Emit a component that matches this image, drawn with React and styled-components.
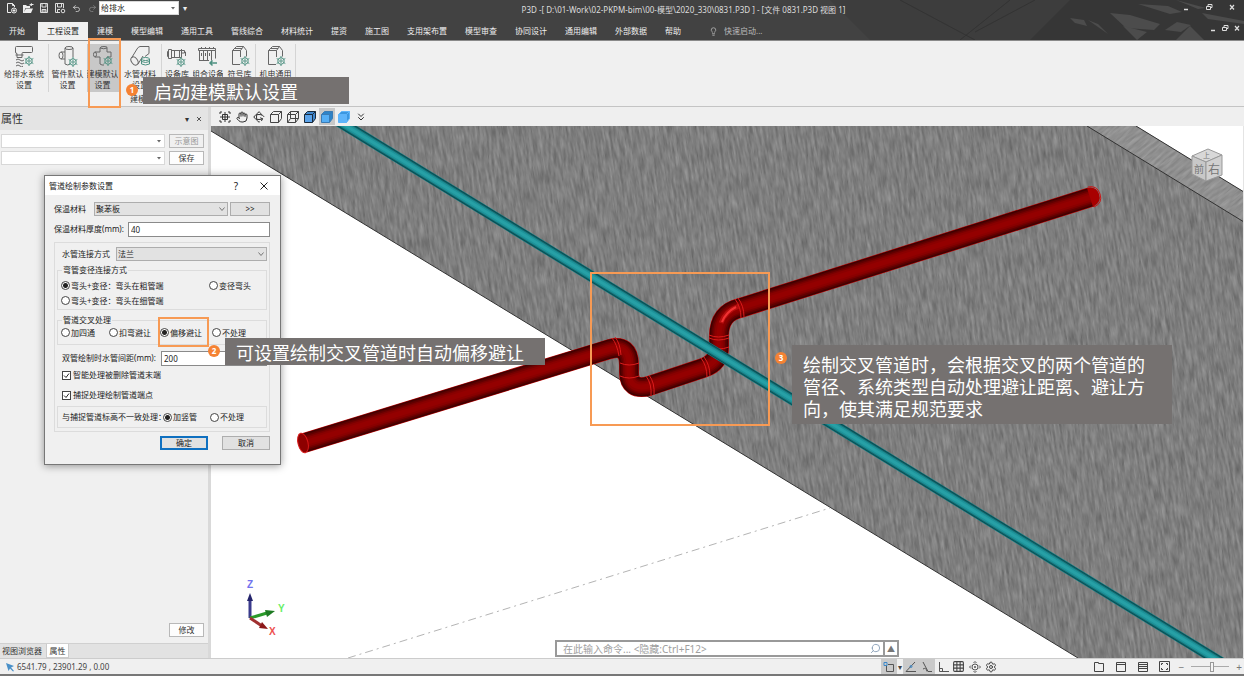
import React, { useState } from 'react';
import styled, { createGlobalStyle } from 'styled-components';
import { Hand, ChevronsDown, Settings, Grid3x3, Undo2, Redo2, Lightbulb, Search, Rotate3d } from 'lucide-react';

const TABS = ['开始', '工程设置', '建模', '模型编辑', '通用工具', '管线综合', '材料统计', '提资', '施工图', '支用架布置', '模型审查', '协同设计', '通用编辑', '外部数据', '帮助'];

const RIBBON = [
  { id: 'system', lines: ['给排水系统', '设置'], line: true },
  { id: 'fitting', lines: ['管件默认', '设置'] },
  { id: 'model', lines: ['建模默认', '设置'], active: true },
  { id: 'material', lines: ['水管材料', '设置'], line: true },
  { id: 'device', lines: ['设备库'] },
  { id: 'combo', lines: ['组合设备'] },
  { id: 'symbol', lines: ['符号库'], line: true },
  { id: 'common', lines: ['机电通用'], line: true },
];

const Gear = ({ x, y }) => (
  <g stroke="#4c9080" strokeWidth="1" fill="none">
    <circle cx={x} cy={y} r="3.2" />
    <circle cx={x} cy={y} r="1.2" />
    <path d={`M${x} ${y - 5}v2M${x} ${y + 3}v2M${x - 4.3} ${y - 2.5}l1.6 1M${x + 2.7} ${y + 1.5}l1.6 1M${x - 4.3} ${y + 2.5}l1.6 -1M${x + 2.7} ${y - 1.5}l1.6 -1`} />
  </g>
);

const ribbonShapes = {
  system: (
    <>
      <path d="M2.5 2.5q0-1 1-1h15q1 0 1 1v4q0 1-1 1H10q-1 0-1 1v4H4v-4q-1.5 0-1.5-1.5z" />
      <path d="M2.5 10h8M3 15q2-2 4 0t4 0M3 18q2-2 4 0t4 0M3 21q2-2 4 0t3 0" />
    </>
  ),
  fitting: (
    <>
      <ellipse cx="12" cy="3" rx="4" ry="1.5" />
      <path d="M8 3v4H4M16 3v9M4 7q-2 0-2 3.5T4 14h4v5q3 2 5 0M4 7q2 0 2 3.5T4 14M8 7v7" />
    </>
  ),
  model: (
    <path d="M8 3q0-1.5 4-1.5T15 3v4h4v5h-4v1M8 3v4H3q-1.500 0-1.500 2.500T3 12h5v7q2 1.500 4 1M3 7q1.500 0 1.500 2.500T3 12M8 3q4 1.500 7 0" />
  ),
  material: (
    <>
      <path d="M20 1.500h-9Q9 2 8 4L2.500 13M20 1.500v7l-4 3M14 11l-5 8" />
      <ellipse cx="5.500" cy="16" rx="3" ry="4.500" transform="rotate(-35 5.500 16)" />
      <g stroke="#4c9080">
        <ellipse cx="16.500" cy="14" rx="4" ry="1.500" />
        <path d="M12.500 14v5q4 2 8 0v-5M12.500 16.500q4 2 8 0" />
      </g>
    </>
  ),
  device: <path d="M2.500 4.500h3v9h-3zM5.500 5.500h10v7h-10M8.500 5.500v7M13.500 5.500v7M15.500 4v4h3V5.500h-3M2.500 6.500h-1v5h1M18.500 7h1v4" />,
  combo: (
    <>
      <path d="M1.500 3.500h17v2h-17zM2.500 5.500v10M6.500 5.500v10M10.500 5.500v10M14.500 5.500v10M18.500 5.500v8M2 15.500h10M4.500 2v2M8.500 2v2M12.500 2v2M16.500 2v2M4.500 8v3M8.500 8v3M12.500 8v3" />
      <path d="M20 18h-7M15.500 15.500L13 18l2.500 2.500" stroke="#4c9080" strokeWidth="1.500" />
    </>
  ),
  symbol: <path d="M3.500 5.500v14H11M3.500 5.500l4-4h7l3 4v6M3.500 5.500h8V12M11.500 5.500l3-4M6 3.500h7" />,
  common: <path d="M3.500 5.500v14H11M3.500 5.500l4-4h7l3 4v6M3.500 5.500h8V12M11.500 5.500l3-4M6 3.500h7" />,
};

const gears = { system: [16, 16], fitting: [16, 17], model: [16, 16], device: [15, 17], symbol: [16, 16], common: [16, 16] };

const RibbonIcon = ({ id }) => (
  <svg width="22" height="22" viewBox="0 0 22 22" fill="none" stroke="#666" strokeWidth="1">
    {ribbonShapes[id]}
    {gears[id] && <Gear x={gears[id][0]} y={gears[id][1]} />}
  </svg>
);

const Cube = ({ fill = 'none', side = fill, stroke = '#444', inner }) => (
  <svg width="14" height="14" viewBox="0 0 14 14" fill={fill} stroke={stroke} strokeWidth="1">
    <path d="M1.500 4.500l3-3h8v7l-3 4" fill={side} />
    <path d="M1.500 4.500h8v8h-8zM9.500 4.500l3-3" />
    {inner && <path d="M4.500 1.500v7h8M4.500 8.500l-3 4" fill="none" />}
  </svg>
);

const RED_PIPE = 'M304 443L610 349Q629 344 629 365V372Q629 391 649 386L703 368Q719 363 719 347V336Q719 313 740 308L1091 197';
const RED_LAYERS = [[20, '#c40a0a'], [19, '#3c0000'], [17, '#4c0000'], [15, '#600000'], [12, '#780000'], [9, '#8a0000'], [5, '#940000']];
const TEAL_LAYERS = [[11, '#0c8086'], [10, '#0d4a50'], [8, '#14757b'], [6, '#1f9299'], [3, '#27a0a6']];

const Scene = () => (
  <SceneSvg viewBox="211 126 1033 532" preserveAspectRatio="xMinYMin slice">
    <defs>
      <filter id="grain" x="0" y="0" width="100%" height="100%" colorInterpolationFilters="sRGB">
        <feTurbulence type="fractalNoise" baseFrequency="0.400 0.060" numOctaves="3" seed="4" />
        <feColorMatrix values="0.260 0 0 0 0.365  0.260 0 0 0 0.365  0.260 0 0 0 0.365  0 0 0 0 1" />
      </filter>
      <clipPath id="wall">
        <path d="M211 126H1136L1244 192V658H1078L211 131z" />
      </clipPath>
      <clipPath id="edge">
        <path d="M1087 126H1136L1244 192V222z" />
      </clipPath>
    </defs>
    <rect x="211" y="126" width="1033" height="532" fill="#fff" />
    <g clipPath="url(#wall)">
      <rect x="100" y="-200" width="1300" height="1200" filter="url(#grain)" transform="rotate(-8 700 400)" />
    </g>
    <g clipPath="url(#edge)">
      <rect x="900" y="-100" width="500" height="500" filter="url(#grain)" transform="rotate(50 1150 150)" />
      <path d="M1087 126H1136L1244 192V222z" fill="#bbb" opacity="0.300" />
    </g>
    <path d="M211 131L1078 658M1087 126L1244 222M1136 126L1244 192" stroke="#333" fill="none" />
    <path d="M348 658L830 508" stroke="#b4b4b4" strokeDasharray="8 4 2 4" />

    {RED_LAYERS.map(([w, c]) => (
      <path key={w} d={RED_PIPE} fill="none" stroke={c} strokeWidth={w} />
    ))}
    <ellipse cx="303" cy="443" rx="5" ry="10" transform="rotate(-14 303 443)" fill="#8d0000" stroke="#d81818" />
    <path d="M1087 188q9-2 12 6t-6 13z" fill="#a80000" />
    <path d="M1088 187q9-2 12 7t-6 13" fill="none" stroke="#d01414" />
    <path d="M721 323Q725 311 739 306" fill="none" stroke="#d81c1c" strokeWidth="5" opacity="0.500" />
    <path d="M722 322Q726 312 736 307" fill="none" stroke="#ff3c3c" strokeWidth="2" opacity="0.800" />
    <path d="M612 338q5 6 7 18M615 337q5 6 6 18M620 363q9 4 19 0M620 376q9 4 19 0M646 376q6 8 5 20M649 375q6 8 5 20M701 358q6 8 6 19M704 357q6 8 6 19M709 335q9 4 20 0M709 338q9 4 20 0M709 347q9 4 20 0M735 299q6 8 6 19M738 298q6 8 6 19" fill="none" stroke="#dc1c1c" />

    {TEAL_LAYERS.map(([w, c]) => (
      <path key={w} d="M330 116L1230 668" stroke={c} strokeWidth={w} />
    ))}

    {/* view cube */}
    <g stroke="#999" fill="#c8c8c8">
      <path d="M1192 156L1208 149L1222 155L1206 162z" fill="#d8d8d8" />
      <path d="M1192 156L1206 162V181L1192 174z" />
      <path d="M1206 162L1222 155V175L1206 181z" fill="#d0d0d0" />
    </g>
    <g fill="#777" fontFamily="'Noto Sans CJK SC', sans-serif">
      <text x="1194" y="173" fontSize="10">前</text>
      <text x="1208" y="174" fontSize="12">右</text>
      <text x="1203" y="158" fontSize="7">上</text>
    </g>

    {/* axes */}
    <g strokeWidth="3" fill="none">
      <path d="M250 618V598" stroke="#3a3a8c" />
      <path d="M250 618L267 613" stroke="#2a9a2a" />
      <path d="M250 618L262 626" stroke="#a03030" />
    </g>
    <path d="M247 601L250 593L253 601z" fill="#24246c" />
    <path d="M265 610L275 611L267 617z" fill="#1d7a22" />
    <path d="M262 622L268 629L259 628z" fill="#8c1818" />
    <g fontFamily="'Liberation Sans', sans-serif" fontWeight="bold" fontSize="10">
      <text x="247" y="588" fill="#7272ee">Z</text>
      <text x="278" y="612" fill="#66ee66">Y</text>
      <text x="269" y="635" fill="#ee5050">X</text>
    </g>
  </SceneSvg>
);

const WindowControls = ({ small }) => (
  <Controls $small={small}>
    <button aria-label="最小化"><svg width="8" height="8"><path d="M2 6.500h4" stroke="#ddd" strokeWidth="1.500" /></svg></button>
    <button aria-label="还原"><svg width="8" height="8" fill="none" stroke="#ddd"><path d="M1.500 3.500h4v3h-4zM3 3V1.500h4v3H6" /></svg></button>
    <button aria-label="关闭"><svg width="8" height="8"><path d="M2 2l4 4.500M6 2L2 6.500" stroke="#ddd" strokeWidth="1.200" /></svg></button>
  </Controls>
);

const Arrow = ({ chevron }) => (
  <ArrowMark width="6" height="6" viewBox="0 0 6 6">
    {chevron ? <path d="M0.500 1.500L3 4.500L5.500 1.500" fill="none" stroke="#777" /> : <path d="M1 2h4L3 4.500z" fill="#666" />}
  </ArrowMark>
);

const Combo = ({ id, label, options, gray, width }) => (
  <ComboBox $gray={gray} $width={width}>
    <select id={id} aria-label={label}>
      {options.map(o => <option key={o}>{o}</option>)}
    </select>
    <Arrow chevron={gray} />
  </ComboBox>
);

const Radio = ({ name, value, current, onChange, children }) => (
  <Option>
    <input type="radio" name={name} checked={current === value} onChange={() => onChange(value)} />
    {children}
  </Option>
);

const PipeDialog = () => {
  const [elbow, setElbow] = useState('thick');
  const [cross, setCross] = useState('offset');
  const [level, setLevel] = useState('riser');

  return (
    <Dialog role="dialog" aria-label="管道绘制参数设置">
      <DialogTitle>
        <span>管道绘制参数设置</span>
        <button aria-label="帮助">?</button>
        <button aria-label="关闭"><svg width="8" height="8"><path d="M0.500 0.500l7 7M7.500 0.500l-7 7" stroke="#222" /></svg></button>
      </DialogTitle>
      <DialogBody>
        <Field>
          <label htmlFor="mat">保温材料</label>
          <Combo id="mat" gray options={['聚苯板']} width="134px" />
          <PushButton $width="40px">&gt;&gt;</PushButton>
        </Field>
        <Field>
          <label htmlFor="thick">保温材料厚度(mm):</label>
          <TextBox id="thick" defaultValue="40" $width="142px" />
        </Field>
        <Frame>
          <Field $inset>
            <label htmlFor="joint">水管连接方式</label>
            <Combo id="joint" gray options={['法兰']} width="151px" />
          </Field>
          <Group $height="45px">
            <legend>弯管变径连接方式</legend>
            <OptionGrid $columns="148px auto" $top="3px">
              <Radio name="elbow" value="thick" current={elbow} onChange={setElbow}>弯头+变径：弯头在粗管端</Radio>
              <Radio name="elbow" value="reduce" current={elbow} onChange={setElbow}>变径弯头</Radio>
              <Radio name="elbow" value="thin" current={elbow} onChange={setElbow}>弯头+变径：弯头在细管端</Radio>
            </OptionGrid>
          </Group>
          <Group $height="30px">
            <legend>管道交叉处理</legend>
            <OptionGrid $columns="48px 51px 52px auto">
              <Radio name="cross" value="four" current={cross} onChange={setCross}>加四通</Radio>
              <Radio name="cross" value="bend" current={cross} onChange={setCross}>扣弯避让</Radio>
              <Radio name="cross" value="offset" current={cross} onChange={setCross}>偏移避让</Radio>
              <Radio name="cross" value="none" current={cross} onChange={setCross}>不处理</Radio>
            </OptionGrid>
          </Group>
          <Field $inset>
            <label htmlFor="gap">双管绘制时水管间距(mm):</label>
            <TextBox id="gap" defaultValue="200" $width="106px" />
          </Field>
          <CheckRow $height="18px"><input type="checkbox" defaultChecked />智能处理被删除管道末端</CheckRow>
          <CheckRow $height="22px"><input type="checkbox" defaultChecked />捕捉处理绘制管道端点</CheckRow>
          <LevelRow>
            <span>与捕捉管道标高不一致处理：</span>
            <Radio name="level" value="riser" current={level} onChange={setLevel}>加竖管</Radio>
            <Radio name="level" value="none" current={level} onChange={setLevel}>不处理</Radio>
          </LevelRow>
        </Frame>
        <DialogButtons>
          <PushButton $width="48px" $primary>确定</PushButton>
          <PushButton $width="48px">取消</PushButton>
        </DialogButtons>
      </DialogBody>
    </Dialog>
  );
};

const App = () => {
  const [tab, setTab] = useState('工程设置');

  return (
    <Page>
      <GlobalStyle />
      <Header>
        <HeaderArt viewBox="0 0 414 40" preserveAspectRatio="xMaxYMin slice">
          <path d="M0 0H414V40H40z" fill="#363636" opacity="0.400" />
          <path d="M240 0H414V40H200z" fill="#2f2f2f" opacity="0.500" />
          <g fill="#4c4c4c">
            <path d="M280 13l20 2 30 9 -6 6 -28-2z" />
            <path d="M308 4l30 2 14 6 -12 2z" />
            <path d="M240 18l14 2 3 6 -12-3z" />
            <path d="M293 26l24 6 -10 8z" />
            <path d="M335 30l12-8 14 3 -10 7z" />
            <path d="M346 40l14-14 14 14z" />
            <path d="M372 13l42 8v3l-36-5z" />
            <path d="M346 0l30 8 -8 1z" />
            <path d="M258 20l10 4 10 10z" />
          </g>
          <path d="M70 0l75 40M180 0l-50 40M205 0l-60 32" stroke="#333" fill="none" />
        </HeaderArt>
        <TitleRow>
          <QuickBar>
            <button aria-label="新建"><svg width="12" height="12" fill="none" stroke="#eee"><path d="M5 10.500H1.500v-9h5l2 2V5M6.500 1.500v2h2" /><circle cx="8" cy="8.500" r="2.500" /><path d="M8 7v3M6.500 8.500h3" /></svg></button>
            <button aria-label="打开"><svg width="12" height="12" fill="#eee"><path d="M1 11V3h3l1 1h3v2H3.500L2 10l2-3.500h7L9 11zM7 3l3-2v1h1.500v1H10v1z" /></svg></button>
            <button aria-label="保存"><svg width="12" height="12" fill="none" stroke="#ddd"><path d="M2.500 1.500h7v9h-7zM4 1.500V5h4V1.500M4 10.500v-3h4v3M4 9h4" /></svg></button>
            <button aria-label="另存为"><svg width="12" height="12" fill="none" stroke="#ddd"><path d="M6 10.500H1.500v-9h8V6M3.500 1.500V5h4V1.500M3.500 10V7.500H6" /><circle cx="9" cy="9" r="1.800" /></svg></button>
            <button aria-label="撤销"><Undo2 size={9} color="#ddd" /></button>
            <button aria-label="重做"><Redo2 size={9} color="#888" /></button>
          </QuickBar>
          <Combo id="major" label="专业" options={['给排水']} width="80px" />
          <More>▾</More>
          <Title>P3D -[ D:\01-Work\02-PKPM-bim\00-模型\2020_330\0831.P3D ] - [文件 0831.P3D 视图 1]</Title>
          <WindowControls />
        </TitleRow>
        <TabRow>
          {TABS.map(t => (
            <Tab key={t} $active={t === tab} onClick={() => setTab(t)}>{t}</Tab>
          ))}
          <QuickStart>
            <Lightbulb size={9} />
            <input aria-label="快速启动" placeholder="快速启动..." />
          </QuickStart>
          <WindowControls small />
        </TabRow>
      </Header>

      <Ribbon>
        {RIBBON.map(item => (
          <Tool key={item.id} $active={item.active} $line={item.line}>
            <RibbonIcon id={item.id} />
            {item.lines.map(l => <span key={l}>{l}</span>)}
          </Tool>
        ))}
        <GroupName>建模设置</GroupName>
      </Ribbon>

      <Main>
        <Side>
          <SideTitle>
            <h2>属性</h2>
            <button aria-label="菜单">▾</button>
            <button aria-label="关闭面板"><svg width="6" height="6"><path d="M1 1l4 4M5 1L1 5" stroke="#555" /></svg></button>
          </SideTitle>
          <SideForm>
            <Combo id="type" label="类型" options={['']} />
            <SideButton $muted disabled>示意图</SideButton>
            <Combo id="style" label="样式" options={['']} />
            <SideButton>保存</SideButton>
          </SideForm>
          <SideFoot><SideButton>修改</SideButton></SideFoot>
          <SideTabs>
            <button>视图浏览器</button>
            <SideTabOn>属性</SideTabOn>
          </SideTabs>
        </Side>

        <View>
          <ViewBar>
            <ViewButton aria-label="全图"><svg width="12" height="12" fill="none" stroke="#333"><path d="M1 3V1h2M9 1h2v2M11 9v2H9M3 11H1V9M6 1v10M1 6h10M3.500 3.500h5v5h-5z" /></svg></ViewButton>
            <ViewButton aria-label="平移"><Hand size={12} /></ViewButton>
            <ViewButton aria-label="旋转"><Rotate3d size={12} /></ViewButton>
            <ViewButton aria-label="线框"><Cube /></ViewButton>
            <ViewButton aria-label="隐藏线"><Cube inner /></ViewButton>
            <ViewButton aria-label="着色"><Cube fill="#5ba3ea" side="#3f86cc" stroke="#1a2a3a" /></ViewButton>
            <ViewButton aria-label="真实" $active><Cube fill="#55aef5" side="#2d83c8" stroke="#3a7bb5" /></ViewButton>
            <ViewButton aria-label="渲染"><Cube fill="#5eb4fa" side="#3c97e0" stroke="#5eb4fa" /></ViewButton>
            <ViewButton aria-label="更多"><ChevronsDown size={12} /></ViewButton>
          </ViewBar>
          <Canvas>
            <Scene />
            <Command>
              <input aria-label="命令" placeholder="在此输入命令... <隐藏:Ctrl+F12>" />
              <FlippedSearch size={11} color="#8aa0b8" />
              <button aria-label="展开">▲</button>
            </Command>
          </Canvas>
        </View>
      </Main>

      <Status>
        <svg width="10" height="10"><path d="M1 1l8 3-3 1.500L9 9 8 9.500 5 6.500 3.500 9z" fill="#4a90c8" /></svg>
        <Coords>6541.79 , 23901.29 , 0.00</Coords>
        <SnapTools>
          <StatusButton $active aria-label="捕捉"><svg width="12" height="12" fill="none" stroke="#555"><path d="M5 3.500h5.500v7h-7V5" /><path d="M1 1.500h3v3H1z" stroke="#3b87c8" /></svg></StatusButton>
          <Caret>▾</Caret>
          <StatusButton $active aria-label="极轴"><svg width="12" height="12" fill="none" stroke="#555"><path d="M11 10.500H1L10 1" /><circle cx="6" cy="5.500" r="1" stroke="#3b87c8" /></svg></StatusButton>
          <StatusButton $active aria-label="角度"><svg width="12" height="12" fill="none" stroke="#555"><path d="M2 1l5 9.500h4M2 8q3-2 4 2.500" /></svg></StatusButton>
          <StatusButton aria-label="正交"><svg width="12" height="12" fill="none" stroke="#555"><path d="M2.500 1v9.500H12M2.500 7.500h3v3" /></svg></StatusButton>
          <StatusButton aria-label="栅格"><Grid3x3 size={13} /></StatusButton>
          <StatusButton aria-label="定位"><svg width="12" height="12" fill="none" stroke="#555"><circle cx="6" cy="6" r="3" /><path d="M6 5v2M5 6h2M4.500 2L6 0.500 7.500 2M4.500 10L6 11.500 7.500 10M2 4.500L0.500 6 2 7.500M10 4.500L11.500 6 10 7.500" /></svg></StatusButton>
          <StatusButton aria-label="设置"><Settings size={12} /></StatusButton>
        </SnapTools>
        <Layouts>
          <button aria-label="新窗口"><svg width="11" height="11" fill="none" stroke="#444"><path d="M1.500 1.500h4v1h5v8h-9z" /></svg></button>
          <button aria-label="单窗口"><svg width="11" height="11" fill="none" stroke="#444"><path d="M1.500 1.500h9v9h-9zM1.500 3.500h9" /></svg></button>
          <button aria-label="层叠"><svg width="11" height="11" fill="none" stroke="#444"><path d="M1.500 1.500h9v9h-9zM1.500 3.500h9M1.500 5.500h9M1.500 7.500h9" /></svg></button>
          <button aria-label="平铺"><svg width="11" height="11" fill="none" stroke="#444"><path d="M0.500 0.500h10v10h-10zM2.500 4V2.500H4M7 2.500h1.500V4M8.500 7v1.500H7M4 8.500H2.500V7" /></svg></button>
        </Layouts>
        <Zoom>
          <button aria-label="缩小">−</button>
          <input type="range" aria-label="缩放" defaultValue="55" />
          <button aria-label="放大">+</button>
        </Zoom>
      </Status>

      <PipeDialog />

      <Marker $x={88} $y={38} $w={33} $h={70} />
      <Marker $x={158} $y={317} $w={51} $h={30} />
      <Marker $x={590} $y={272} $w={180} $h={154} />
      <Badge $x={126} $y={84}>1</Badge>
      <Badge $x={208} $y={345}>2</Badge>
      <Badge $x={775} $y={352}>3</Badge>
      <Note $x={143} $y={77} $w={206}>启动建模默认设置</Note>
      <Note $x={225} $y={338} $w={320}>可设置绘制交叉管道时自动偏移避让</Note>
      <Note $x={792} $y={345} $w={380} $tall>绘制交叉管道时，会根据交叉的两个管道的管径、系统类型自动处理避让距离、避让方向，使其满足规范要求</Note>
    </Page>
  );
};

export default App;

const GlobalStyle = createGlobalStyle`
  * {
    box-sizing: border-box;
  }
  body {
    margin: 0;
    font: 8px/10px 'Noto Sans', 'Noto Sans CJK SC', sans-serif;
    color: #333;
  }
  button, input, select {
    font: inherit;
    color: inherit;
    margin: 0;
    padding: 0;
    border: 0;
    background: none;
  }
  button {
    display: flex;
    align-items: center;
    justify-content: center;
    white-space: nowrap;
  }
  svg {
    flex: none;
  }
`;

const Page = styled.div`
  position: relative;
  min-height: 100vh;
  display: flex;
  flex-direction: column;
  background: #f0f0f0;
  border-bottom: 2px solid #777;
  overflow: hidden;
`;

const Header = styled.header`
  position: relative;
  background: #424242;
  border-bottom: 1px solid #8a8a8a;
`;

const HeaderArt = styled.svg`
  position: absolute;
  right: 0;
  top: 0;
  width: 414px;
  height: 40px;
`;

const TitleRow = styled.div`
  position: relative;
  display: flex;
  height: 22px;
  padding: 1px 4px 6px 6px;
`;

const QuickBar = styled.div`
  display: flex;
  gap: 4px;
  width: 93px;

  button {
    width: 12px;
    height: 14px;
  }
`;

const More = styled.span`
  width: 12px;
  color: #eee;
  line-height: 14px;
  text-align: center;
`;

const Title = styled.h1`
  flex: 1;
  margin: 0;
  padding-right: 6px;
  font-size: 8px;
  line-height: 18px;
  font-weight: normal;
  text-align: center;
  color: #ddd;
  white-space: nowrap;
`;

const Controls = styled.div`
  display: flex;
  gap: ${p => (p.$small ? '4px' : '15px')};
  margin-left: auto;
  align-items: center;
  height: 12px;
  padding-right: ${p => (p.$small ? '3px' : '4px')};
`;

const TabRow = styled.nav`
  position: relative;
  display: flex;
  align-items: stretch;
  height: 18px;
`;

const Tab = styled.button`
  padding: 0 9px;
  color: ${p => (p.$active ? '#222' : '#eee')};
  background: ${p => (p.$active ? '#f0f0f0' : 'none')};
  margin-left: ${p => (p.$active ? '4px' : '0')};
`;

const QuickStart = styled.div`
  display: flex;
  align-items: center;
  gap: 6px;
  padding-left: 19px;
  color: #bbb;

  input {
    width: 60px;
  }
  input::placeholder {
    color: #bbb;
  }
`;

const Ribbon = styled.section`
  display: grid;
  grid-template-columns: 49px 38px 32px 43px 31px 31px 32px 40px;
  align-items: start;
  height: 66px;
  padding-top: 3px;
  border-bottom: 1px solid #c4c4c4;
`;

const Tool = styled.button`
  flex-direction: column;
  justify-content: flex-start;
  height: 48px;
  padding-top: 1px;
  overflow: hidden;
  background: ${p => (p.$active ? '#c8c8c8' : 'none')};
  border-right: 1px solid ${p => (p.$line ? '#d4d4d4' : 'transparent')};

  svg {
    margin-bottom: 1px;
  }
  span {
    line-height: 11px;
  }
`;

const GroupName = styled.span`
  grid-column: 4;
  justify-self: end;
  white-space: nowrap;
`;

const Main = styled.main`
  flex: 1;
  display: flex;
`;

const Side = styled.aside`
  width: 211px;
  display: flex;
  flex-direction: column;
  border-right: 3px solid #d9d9d9;
`;

const SideTitle = styled.div`
  display: flex;
  align-items: center;
  height: 23px;
  gap: 7px;
  padding: 0 6px 0 1px;
  background: #e4e4e4;

  h2 {
    flex: 1;
    margin: 0;
    font-size: 11px;
    font-weight: normal;
  }
`;

const SideForm = styled.div`
  display: grid;
  grid-template-columns: 1fr 35px;
  gap: 3px 4px;
  padding: 4px 4px 0 1px;
`;

const SideButton = styled.button`
  width: 35px;
  height: 14px;
  color: ${p => (p.$muted ? '#999' : '#333')};
  background: ${p => (p.$muted ? '#f0f0f0' : '#fdfdfd')};
  border: 1px solid #b8b8b8;
`;

const SideFoot = styled.div`
  margin-top: auto;
  padding: 0 4px 6px;
  display: flex;
  justify-content: flex-end;
`;

const SideTabs = styled.div`
  display: flex;
  height: 15px;
  background: #e2e2e2;
  border-top: 1px solid #d0d0d0;

  button {
    padding: 0 2px;
  }
`;

const SideTabOn = styled.button`
  margin-left: 2px;
  width: 23px;
  background: #fff;
  border: 1px solid #ccc;
  border-top: 0;
`;

const View = styled.section`
  flex: 1;
  min-width: 0;
  display: flex;
  flex-direction: column;
`;

const ViewBar = styled.div`
  display: flex;
  align-items: center;
  gap: 1px;
  height: 19px;
  padding-left: 6px;
  background: #efefef;
`;

const ViewButton = styled.button`
  width: 16px;
  height: 17px;
  background: ${p => (p.$active ? '#c8c8c8' : 'none')};
`;

const Canvas = styled.div`
  position: relative;
  flex: 1;
  background: #fff;
  overflow: hidden;
  border-right: 1px solid #e4e4e4;
`;

const SceneSvg = styled.svg`
  position: absolute;
  inset: 0;
  width: 100%;
  height: 100%;
`;

const Command = styled.div`
  position: absolute;
  left: 344px;
  bottom: 1px;
  display: flex;
  align-items: center;
  width: 344px;
  height: 17px;
  background: #fff;
  border: 2px solid #999;

  input {
    flex: 1;
    padding-left: 6px;
    font-size: 10px;
  }
  input::placeholder {
    color: #a0a0a0;
  }
  button {
    width: 14px;
    height: 13px;
    margin-left: 2px;
    border-left: 2px solid #999;
    color: #777;
  }
`;

const FlippedSearch = styled(Search)`
  transform: scaleX(-1);
`;

const Status = styled.footer`
  display: flex;
  align-items: center;
  height: 16px;
  padding: 0 2px 0 5px;
  border-top: 1px solid #ccc;
  color: #444;
`;

const Coords = styled.span`
  flex: 1;
  padding-left: 2px;
`;

const SnapTools = styled.div`
  display: flex;
  align-items: center;
  margin-right: 94px;
`;

const StatusButton = styled.button`
  width: 16px;
  height: 15px;
  background: ${p => (p.$active ? '#cacaca' : 'none')};
`;

const Caret = styled.span`
  width: 6px;
  text-align: center;
`;

const Layouts = styled.div`
  display: flex;
  gap: 11px;
  margin-right: 9px;
`;

const Zoom = styled.div`
  display: flex;
  align-items: center;
  gap: 7px;
  font-size: 10px;
  color: #777;

  input {
    appearance: none;
    width: 38px;
    height: 10px;
    background: linear-gradient(#aaa, #aaa) center / 100% 1px no-repeat;
  }
  input::-webkit-slider-thumb {
    appearance: none;
    width: 4px;
    height: 10px;
    background: #f4f4f4;
    border: 1px solid #999;
  }
`;

const ComboBox = styled.div`
  position: relative;
  width: ${p => p.$width || '100%'};
  height: 14px;
  background: ${p => (p.$gray ? '#e2e2e2' : '#fff')};
  border: 1px solid ${p => (p.$gray ? '#adadad' : '#d8d8d8')};

  select {
    display: block;
    appearance: none;
    width: 100%;
    height: 12px;
    padding-left: 1px;
    color: #222;
  }
`;

const ArrowMark = styled.svg`
  position: absolute;
  right: 2px;
  top: 3px;
  pointer-events: none;
`;

const Dialog = styled.section`
  position: absolute;
  left: 44px;
  top: 175px;
  width: 237px;
  height: 290px;
  background: #f0f0f0;
  border: 1px solid #777;
  box-shadow: 0 1px 8px rgba(0, 0, 0, 0.4);
  color: #222;
`;

const DialogTitle = styled.div`
  display: flex;
  align-items: center;
  height: 19px;
  padding: 0 12px 0 4px;
  gap: 22px;
  background: #fff;

  span {
    flex: 1;
  }
  button {
    font-size: 10px;
  }
`;

const DialogBody = styled.div`
  padding: 4px 10px 0 9px;
`;

const Field = styled.div`
  display: flex;
  align-items: center;
  justify-content: space-between;
  height: ${p => (p.$inset ? '16px' : '20px')};
  padding: ${p => (p.$inset ? '0 2px 0 7px' : '0')};
  white-space: nowrap;

  label {
    flex: 1;
  }
  button {
    margin-left: 2px;
  }
`;

const TextBox = styled.input`
  width: ${p => p.$width};
  height: 15px;
  padding: 0 2px;
  background: #fff;
  border: 1px solid #8a8a8a;
`;

const Frame = styled.div`
  height: 190px;
  margin-top: 3px;
  padding-top: 3px;
  border: 1px solid #dcdcdc;
`;

const Group = styled.fieldset`
  height: ${p => p.$height};
  margin: 3px 2px 5px;
  padding: 0 3px;
  border: 1px solid #dcdcdc;

  legend {
    margin-left: 1px;
    padding: 0 1px;
  }
`;

const OptionGrid = styled.div`
  display: grid;
  grid-template-columns: ${p => p.$columns};
  grid-auto-rows: 15px;
  padding-top: ${p => p.$top || 0};
`;

const Option = styled.label`
  display: flex;
  align-items: center;
  gap: 1px;
  white-space: nowrap;

  input {
    appearance: none;
    width: 9px;
    height: 9px;
    border: 1px solid #444;
    border-radius: 50%;
    background: #fff;
  }
  input:checked {
    background: radial-gradient(circle, #222 0 2px, #fff 3px);
  }
`;

const CheckRow = styled.label`
  display: flex;
  align-items: center;
  gap: 2px;
  height: ${p => p.$height};
  padding-left: 7px;

  input {
    appearance: none;
    width: 9px;
    height: 9px;
    border: 1px solid #444;
    background: #fff;
  }
  input:checked {
    background: #fff url("data:image/svg+xml,%3Csvg xmlns='http://www.w3.org/2000/svg' viewBox='0 0 7 7'%3E%3Cpath d='M1 3.500L3 5.500L6 1.500' fill='none' stroke='%23222'/%3E%3C/svg%3E");
  }
`;

const LevelRow = styled.div`
  display: grid;
  grid-template-columns: 101px 47px auto;
  align-items: center;
  height: 22px;
  margin: 0 2px;
  padding-left: 4px;
  border: 1px solid #dcdcdc;
  white-space: nowrap;
`;

const DialogButtons = styled.div`
  display: flex;
  justify-content: flex-end;
  gap: 14px;
  padding-top: 4px;
`;

const PushButton = styled.button`
  width: ${p => p.$width};
  height: 14px;
  background: #e1e1e1;
  border: ${p => (p.$primary ? '2px solid #0f70c0' : '1px solid #adadad')};
`;

/* numbered walkthrough notes over the window */
const Marker = styled.div`
  position: absolute;
  left: ${p => p.$x}px;
  top: ${p => p.$y}px;
  width: ${p => p.$w}px;
  height: ${p => p.$h}px;
  border: 2px solid #f79a54;
  pointer-events: none;
`;

const Badge = styled.span`
  position: absolute;
  left: ${p => p.$x}px;
  top: ${p => p.$y}px;
  width: 12px;
  height: 12px;
  border-radius: 50%;
  background: #f58233;
  color: #fff;
  font-weight: bold;
  line-height: 12px;
  text-align: center;
`;

const Note = styled.p`
  position: absolute;
  left: ${p => p.$x}px;
  top: ${p => p.$y}px;
  width: ${p => p.$w}px;
  margin: 0;
  padding: ${p => (p.$tall ? '8px 22px 5px 11px' : '3px 11px 2px')};
  background: #757170;
  color: #fff;
  font-family: 'Noto Sans CJK SC', sans-serif;
  font-size: 18px;
  line-height: 22px;
`;
